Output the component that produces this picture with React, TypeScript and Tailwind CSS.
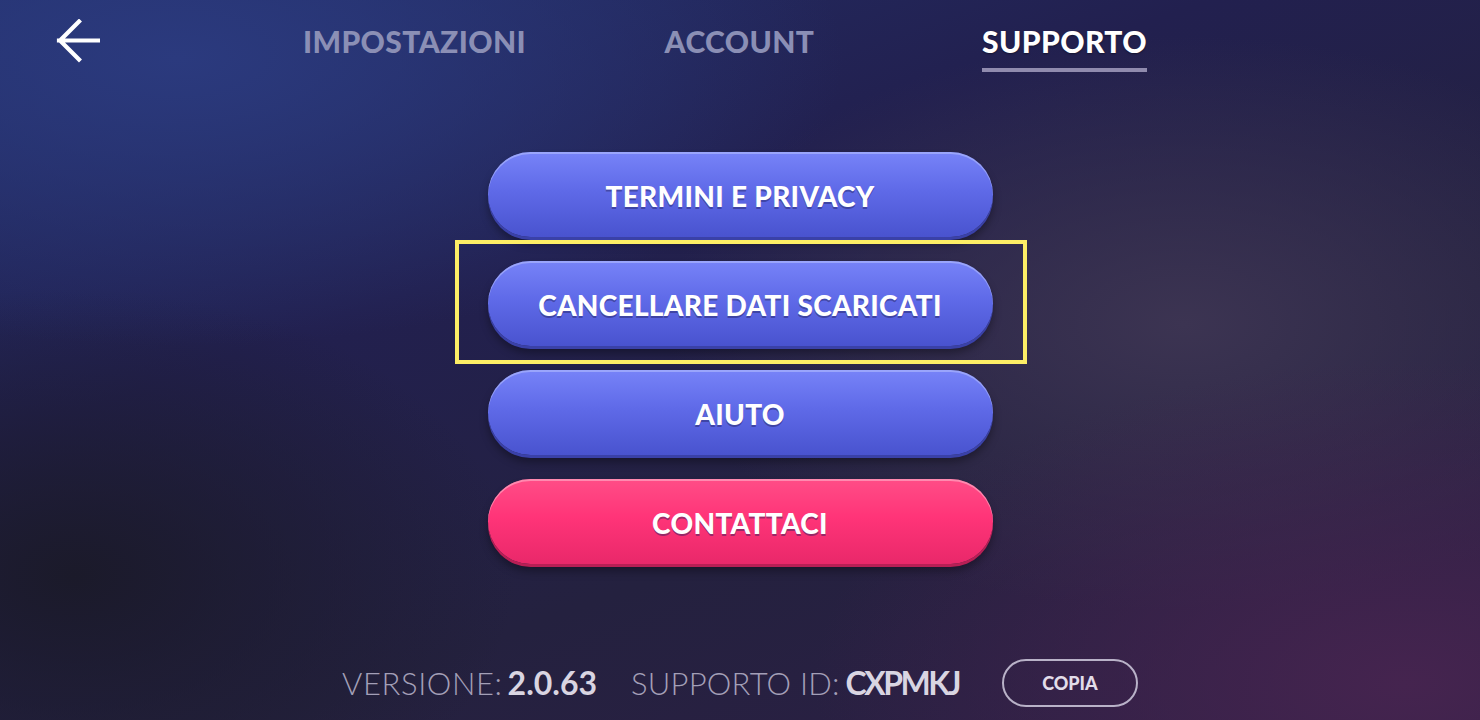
import React from "react";

function Btn({ label, pink }: { label: string; pink?: boolean }) {
  const cls = pink
    ? "bg-[linear-gradient(180deg,#ff4d87_0%,#ff3478_45%,#e9286a_100%)] shadow-[inset_0_2px_0_rgba(255,190,210,0.55),0_3px_0_#b81f55,0_7px_9px_rgba(0,0,0,0.35)]"
    : "bg-[linear-gradient(180deg,#7783f8_0%,#5f6ae8_45%,#4953cf_100%)] shadow-[inset_0_2px_0_rgba(190,200,255,0.5),0_3px_0_#3a41a8,0_7px_9px_rgba(0,0,0,0.35)]";
  return (
    <button
      className={`flex h-[85px] w-[505px] items-center justify-center rounded-full pt-[3px] ${cls} font-['Lato',sans-serif] text-[28px] font-black tracking-[0.3px] text-white [text-shadow:0_2px_0_rgba(30,30,90,0.45)]`}
    >
      {label}
    </button>
  );
}

export default function App() {
  return (
    <div className="flex h-[720px] w-full flex-col overflow-hidden bg-[radial-gradient(ellipse_45%_40%_at_12%_8%,#2b3a7e_0%,rgba(43,58,126,0)_100%),radial-gradient(ellipse_40%_45%_at_95%_95%,#45244f_0%,rgba(69,36,79,0)_100%),radial-gradient(ellipse_35%_40%_at_80%_45%,#3c3452_0%,rgba(60,52,82,0)_100%),radial-gradient(ellipse_30%_40%_at_5%_80%,#1b1a2a_0%,rgba(27,26,42,0)_100%),linear-gradient(160deg,#23306b_0%,#22204f_35%,#24213f_65%,#2d1f45_100%)] font-['Lato',sans-serif]">
      {/* header */}
      <div className="flex h-[100px] shrink-0 items-start pt-[19px]">
        <div className="w-[252px] pl-[56px]">
          <svg width="44" height="44" viewBox="0 0 44 44" fill="none">
            <path d="M3 21.5H43M23 2.5L4 21.5L23 40.5" stroke="white" strokeWidth="4.2" strokeLinecap="square" />
          </svg>
        </div>
        <div className="flex w-[325px] justify-center pt-[5px]">
          <span className="text-[30px] font-black leading-[34px] tracking-[0.4px] text-[#8b8fb5]">IMPOSTAZIONI</span>
        </div>
        <div className="flex w-[325px] justify-center pt-[5px]">
          <span className="text-[30px] font-black leading-[34px] tracking-[0.4px] text-[#8b8fb5]">ACCOUNT</span>
        </div>
        <div className="flex w-[325px] justify-center pt-[5px]">
          <div className="flex flex-col items-stretch">
            <span className="text-[30px] font-black leading-[34px] tracking-[0.4px] text-white [text-shadow:0_1px_2px_rgba(0,0,0,0.4)]">SUPPORTO</span>
            <div className="mt-[10px] h-[4px] bg-[#908bae]" />
          </div>
        </div>
      </div>

      {/* buttons */}
      <div className="mt-[52px] flex flex-col items-center gap-[24px]">
        <Btn label="TERMINI E PRIVACY" />
        <div className="relative">
          <div className="pointer-events-none absolute left-[-33px] top-[-21px] h-[124px] w-[572px] border-4 border-[#fdee66]" />
          <Btn label="CANCELLARE DATI SCARICATI" />
        </div>
        <Btn label="AIUTO" />
        <Btn label="CONTATTACI" pink />
      </div>

      {/* footer */}
      <div className="mt-auto mb-[13px] flex items-center justify-center">
        <span className="text-[31px] font-light tracking-[0.6px] text-[#a39fb7]">VERSIONE:</span>
        <span className="ml-[5px] text-[32px] font-bold text-[#d9d5e2]">2.0.63</span>
        <span className="ml-[34px] text-[31px] font-light tracking-[0.2px] text-[#a39fb7]">SUPPORTO ID:</span>
        <span className="ml-[6px] text-[32px] font-bold tracking-[-2.5px] text-[#d9d5e2]">CXPMKJ</span>
        <button className="ml-[43px] flex h-[48px] w-[136px] items-center justify-center rounded-full border-2 border-[#b9b2c8] text-[18px] font-black text-[#e2dde9]">
          COPIA
        </button>
      </div>
    </div>
  );
}
